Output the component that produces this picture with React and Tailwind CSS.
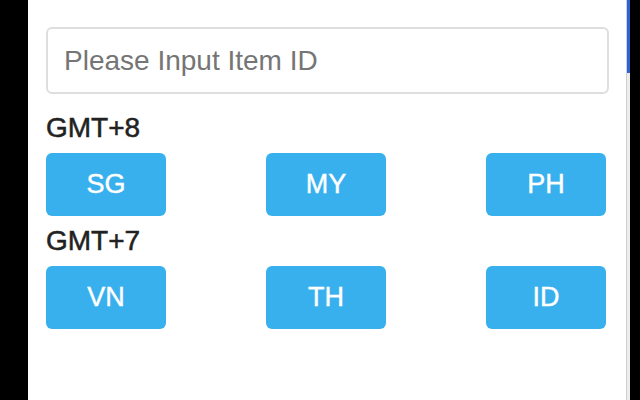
import React, { useState } from 'react';

const zones = [
  { label: 'GMT+8', regions: ['SG', 'MY', 'PH'] },
  { label: 'GMT+7', regions: ['VN', 'TH', 'ID'] },
];

const App = () => {
  const [itemId, setItemId] = useState('');

  return (
    <div className="flex h-[400px] w-[640px] bg-black" style={{ fontFamily: '"Liberation Sans", Arial, sans-serif' }}>
      {/* popup body */}
      <div className="ml-[28px] h-full w-[598px] bg-white pl-[18px] pr-[17px] pt-[27px]">
        <input
          type="text"
          value={itemId}
          onChange={(e) => setItemId(e.target.value)}
          placeholder="Please Input Item ID"
          className="block h-[67px] w-[563px] rounded-[6px] border-2 border-[#dedede] px-[16px] text-[28px] text-[#333] outline-none placeholder:text-[#757575]"
        />

        {zones.map((zone, i) => (
          <div key={zone.label} className={i === 0 ? 'mt-[18px]' : 'mt-[9px]'}>
            <div className="h-[32px] text-[28px] leading-[32px] text-[#222] [-webkit-text-stroke:0.5px_#222]">{zone.label}</div>
            <div className="mt-[9px] flex w-[560px] justify-between">
              {zone.regions.map((r) => (
                <button
                  key={r}
                  className="h-[63px] w-[120px] rounded-[6px] bg-[#39b0ee] text-[27px] text-white [-webkit-text-stroke:0.4px_#fff]"
                >
                  {r}
                </button>
              ))}
            </div>
          </div>
        ))}
      </div>

      {/* scrollbar edge */}
      <div className="flex h-full w-[4px] flex-col border-l border-[#d0d0d0]">
        <div className="h-[73px] bg-[#2f62d4]" />
        <div className="flex-1 bg-[#ececec]" />
      </div>
    </div>
  );
};

export default App;
